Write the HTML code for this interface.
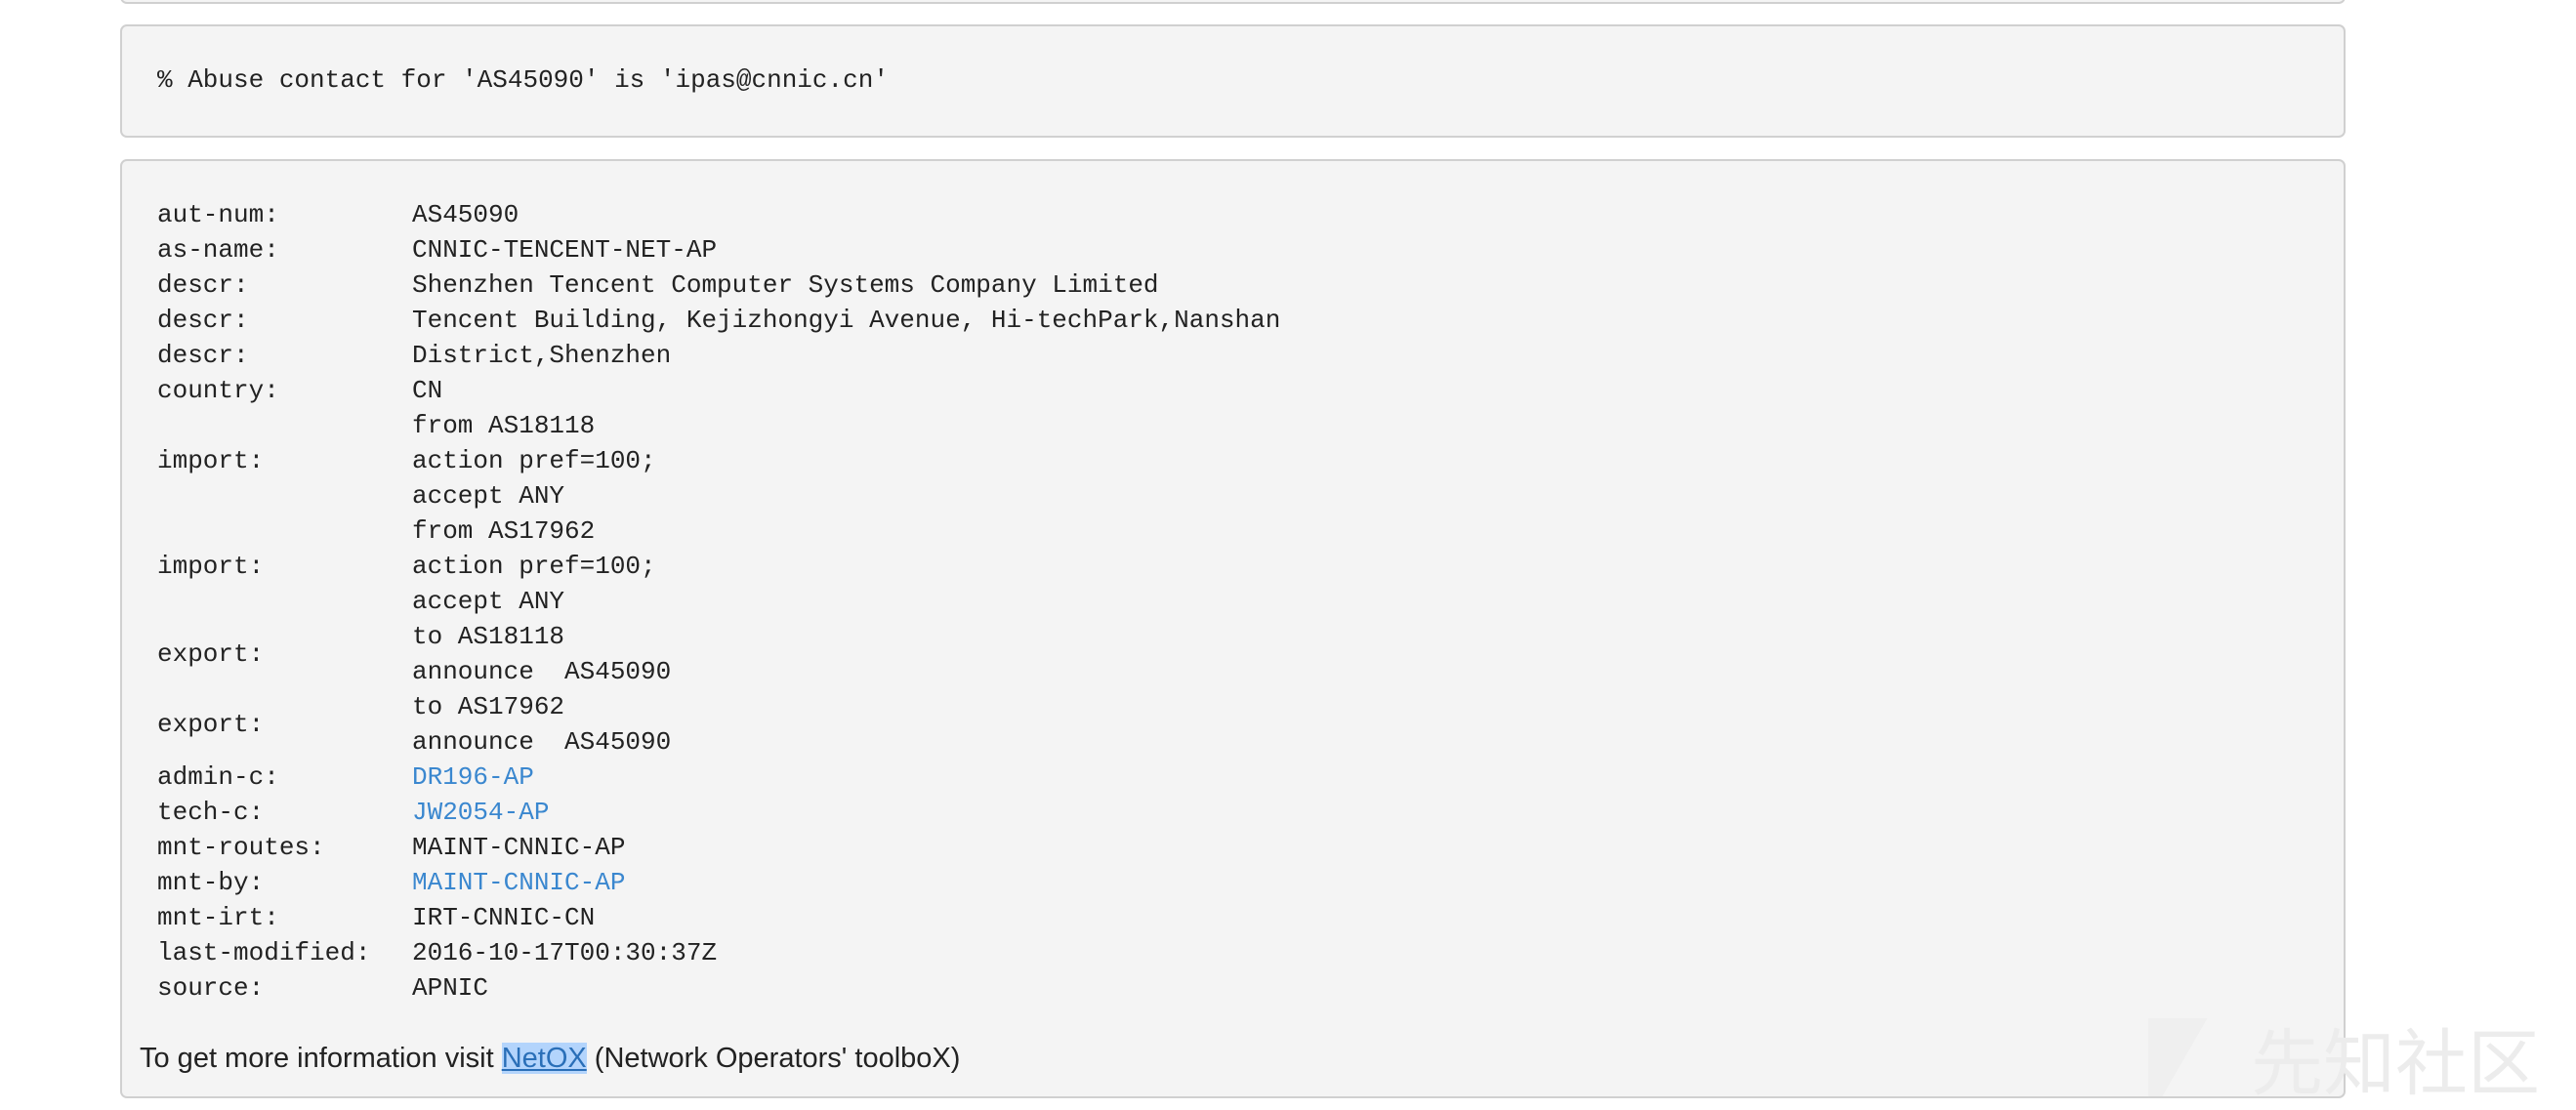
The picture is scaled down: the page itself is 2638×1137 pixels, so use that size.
<!DOCTYPE html>
<html><head><meta charset="utf-8"><style>
body{margin:0;width:2638px;height:1132px;background:#fff;position:relative;overflow:hidden;font-family:"Liberation Mono",monospace;}
.box{position:absolute;left:123px;width:2279px;background:#f4f4f4;border:2px solid #d0d0d0;border-radius:7px;box-sizing:border-box;}
.l{position:absolute;font-size:26px;line-height:36px;color:#222;white-space:pre;}
.k{left:161px}.v{left:422px}
.a{color:#3a87cf}
.wm{position:absolute;left:2200px;top:1030px;font-family:"Noto Sans CJK SC",sans-serif;font-size:74px;color:#ececec;}
</style></head><body>
<div class="box" style="top:-20px;height:24px"></div>
<div class="box" style="top:25px;height:116px"></div>
<div class="l" style="left:161px;top:64px">% Abuse contact for 'AS45090' is 'ipas@cnnic.cn'</div>
<div class="box" style="top:163px;height:962px"></div>
<div class="l k" style="top:202px">aut-num:</div><div class="l v" style="top:202px">AS45090</div>
<div class="l k" style="top:238px">as-name:</div><div class="l v" style="top:238px">CNNIC-TENCENT-NET-AP</div>
<div class="l k" style="top:274px">descr:</div><div class="l v" style="top:274px">Shenzhen Tencent Computer Systems Company Limited</div>
<div class="l k" style="top:310px">descr:</div><div class="l v" style="top:310px">Tencent Building, Kejizhongyi Avenue, Hi-techPark,Nanshan</div>
<div class="l k" style="top:346px">descr:</div><div class="l v" style="top:346px">District,Shenzhen</div>
<div class="l k" style="top:382px">country:</div><div class="l v" style="top:382px">CN</div>
<div class="l v" style="top:418px">from AS18118</div>
<div class="l k" style="top:454px">import:</div><div class="l v" style="top:454px">action pref=100;</div>
<div class="l v" style="top:490px">accept ANY</div>
<div class="l v" style="top:526px">from AS17962</div>
<div class="l k" style="top:562px">import:</div><div class="l v" style="top:562px">action pref=100;</div>
<div class="l v" style="top:598px">accept ANY</div>
<div class="l v" style="top:634px">to AS18118</div>
<div class="l k" style="top:652px">export:</div>
<div class="l v" style="top:670px">announce  AS45090</div>
<div class="l v" style="top:706px">to AS17962</div>
<div class="l k" style="top:724px">export:</div>
<div class="l v" style="top:742px">announce  AS45090</div>
<div class="l k" style="top:778px">admin-c:</div><div class="l v a" style="top:778px">DR196-AP</div>
<div class="l k" style="top:814px">tech-c:</div><div class="l v a" style="top:814px">JW2054-AP</div>
<div class="l k" style="top:850px">mnt-routes:</div><div class="l v" style="top:850px">MAINT-CNNIC-AP</div>
<div class="l k" style="top:886px">mnt-by:</div><div class="l v a" style="top:886px">MAINT-CNNIC-AP</div>
<div class="l k" style="top:922px">mnt-irt:</div><div class="l v" style="top:922px">IRT-CNNIC-CN</div>
<div class="l k" style="top:958px">last-modified:</div><div class="l v" style="top:958px">2016-10-17T00:30:37Z</div>
<div class="l k" style="top:994px">source:</div><div class="l v" style="top:994px">APNIC</div>
<div class="l" style="left:143px;top:1066px;font-family:'Liberation Sans',sans-serif;font-size:29px;">To get more information visit <span style="background:#b3d4fc;color:#2a6fb8;text-decoration:underline">NetOX</span> (Network Operators' toolboX)</div>
<div class="wm"><span style="display:inline-block;width:75px;height:80px;background:linear-gradient(120deg,#efefef 50%,transparent 50%);vertical-align:-8px;margin-right:30px"></span>先知社区</div>
</body></html>
